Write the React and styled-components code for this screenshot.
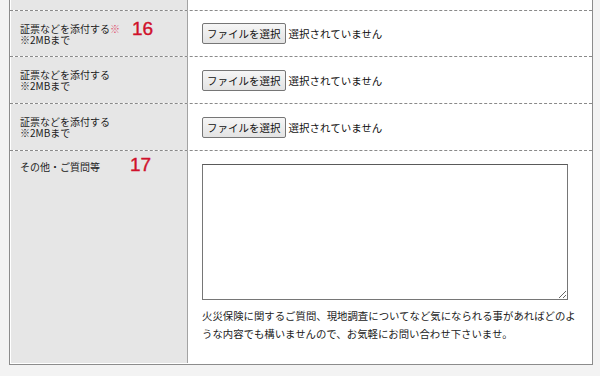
import React from "react";
import styled, { createGlobalStyle } from "styled-components";

const Global = createGlobalStyle`
  html, body { margin: 0; padding: 0; }
  body {
    background: #f3f3f3;
    font-family: "Noto Sans CJK JP", "Noto Sans", sans-serif;
    overflow: hidden;
    width: 600px;
    height: 376px;
  }
`;

const Page = styled.div`
  padding-left: 9px;
  width: 600px;
  box-sizing: border-box;
`;

const Table = styled.div`
  width: 584px;
  box-sizing: border-box;
  border-left: 1px solid #8c8c8c;
  border-right: 1px solid #8c8c8c;
  border-bottom: 1px solid #8c8c8c;
  background: #fff;
  padding-bottom: 1px;
`;

const Row = styled.div`
  display: grid;
  grid-template-columns: 177px 1fr;
  padding-left: 1px;
  border-top: ${(p) => (p.$first ? "none" : "1px dashed #8a8a8a")};
  min-height: ${(p) => p.$h}px;
`;

const Label = styled.div`
  position: relative;
  background: #e6e6e6;
  border-right: 1px solid #a3a3a3;
  padding: ${(p) => (p.$top ? "10px 9px 0" : "0 9px")};
  display: flex;
  flex-direction: column;
  justify-content: ${(p) => (p.$top ? "flex-start" : "center")};
  font-size: 10px;
  line-height: 11px;
  color: #222;
`;

const Mark = styled.span`
  color: #e0506f;
`;

const Num = styled.span`
  position: absolute;
  left: ${(p) => p.$x}px;
  top: ${(p) => p.$y}px;
  font-family: "Liberation Sans", Arial, sans-serif;
  font-size: 19px;
  line-height: 19px;
  color: #d0112b;
  -webkit-text-stroke: 0.4px #d0112b;
`;

const Field = styled.div`
  display: flex;
  flex-direction: ${(p) => (p.$column ? "column" : "row")};
  align-items: ${(p) => (p.$column ? "flex-start" : "center")};
  padding: ${(p) => (p.$column ? "13px 14px 20px" : "0 14px")};
  gap: ${(p) => (p.$column ? "5px" : "3px")};
`;

const FileButton = styled.button`
  height: 21px;
  padding: 0 4px;
  border: 1px solid #767676;
  border-radius: 2px;
  background: linear-gradient(#f6f6f6, #e3e3e3);
  font-family: "Noto Sans CJK JP", sans-serif;
  font-size: 10.5px;
  color: #111;
  line-height: 19px;
`;

const FileState = styled.span`
  font-size: 10.5px;
  color: #111;
`;

const TextArea = styled.textarea`
  width: 366px;
  height: 136px;
  box-sizing: border-box;
  border: 1px solid #767676;
  border-top-color: #5a5a5a;
  margin: 0;
  background: #fff;
`;

const Help = styled.p`
  margin: 2px 0 0;
  width: 376px;
  font-size: 10.4px;
  line-height: 18px;
  color: #222;
`;

const fileRows = [
  { id: 1, mark: true, num: "16" },
  { id: 2 },
  { id: 3 },
];

export default function App() {
  return (
    <>
      <Global />
      <Page>
        <Table>
          <Row $first $h={10}>
            <Label />
            <div />
          </Row>
          {fileRows.map((r, i) => (
            <Row key={r.id} $h={i === 0 ? 45 : 46}>
              <Label>
                <span>
                  証票などを添付する{r.mark && <Mark>※</Mark>}
                </span>
                <span>※2MBまで</span>
                {r.num && (
                  <Num $x={121} $y={8}>
                    {r.num}
                  </Num>
                )}
              </Label>
              <Field>
                <FileButton type="button">ファイルを選択</FileButton>
                <FileState>選択されていません</FileState>
              </Field>
            </Row>
          ))}
          <Row $h={212}>
            <Label $top>
              <span>その他・ご質問等</span>
              <Num $x={119} $y={4}>
                17
              </Num>
            </Label>
            <Field $column>
              <TextArea />
              <Help>
                火災保険に関するご質問、現地調査についてなど気になられる事があればどのような内容でも構いませんので、お気軽にお問い合わせ下さいませ。
              </Help>
            </Field>
          </Row>
        </Table>
      </Page>
    </>
  );
}
